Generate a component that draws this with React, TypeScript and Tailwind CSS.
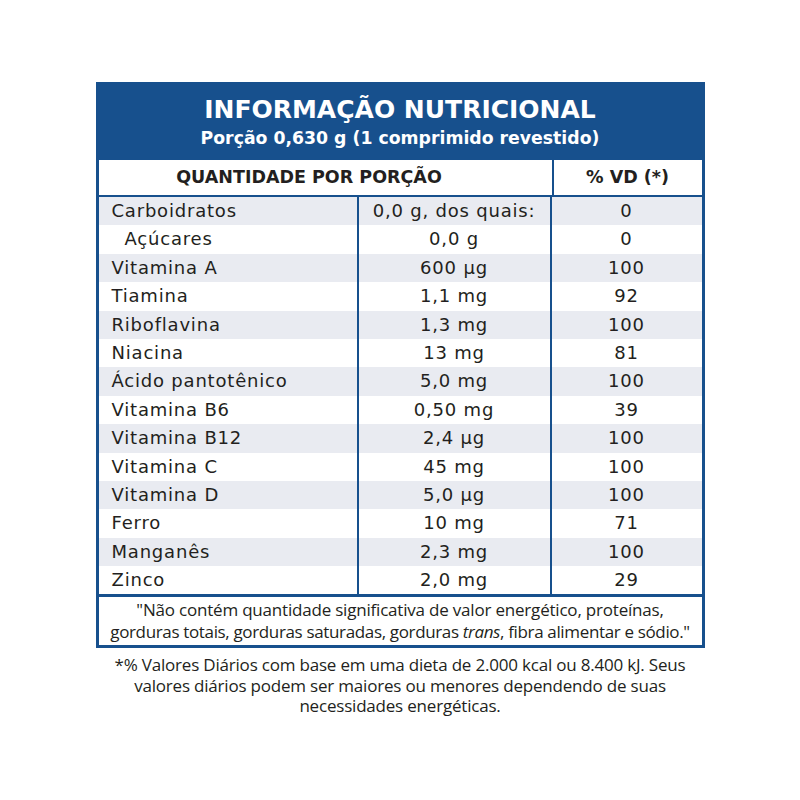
import React from "react";

const rows: [string, string, string][] = [
  ["Carboidratos", "0,0 g, dos quais:", "0"],
  ["\u00A0\u00A0Açúcares", "0,0 g", "0"],
  ["Vitamina A", "600 µg", "100"],
  ["Tiamina", "1,1 mg", "92"],
  ["Riboflavina", "1,3 mg", "100"],
  ["Niacina", "13 mg", "81"],
  ["Ácido pantotênico", "5,0 mg", "100"],
  ["Vitamina B6", "0,50 mg", "39"],
  ["Vitamina B12", "2,4 µg", "100"],
  ["Vitamina C", "45 mg", "100"],
  ["Vitamina D", "5,0 µg", "100"],
  ["Ferro", "10 mg", "71"],
  ["Manganês", "2,3 mg", "100"],
  ["Zinco", "2,0 mg", "29"],
];

const wide = { fontFamily: '"DejaVu Sans", "Open Sans", sans-serif' };
const narrow = { fontFamily: '"Open Sans", "Noto Sans", sans-serif' };

export default function App() {
  return (
    <div className="w-[800px] h-[800px] bg-white flex flex-col items-center pt-[82px] text-[#231f20]" style={wide}>
      <div className="w-[609px] border-[3px] border-[#17508d] bg-white">
        <div className="h-[75px] bg-[#17508d] flex flex-col items-center pt-[10px] text-white">
          <div className="text-[25px] font-bold leading-[30px]">INFORMAÇÃO NUTRICIONAL</div>
          <div className="text-[17.3px] font-bold leading-[22px] mt-[2px]">Porção 0,630 g (1 comprimido revestido)</div>
        </div>
        <div className="flex h-[37px] border-b-[2px] border-[#17508d]">
          <div className="w-[455px] border-r-[2px] border-[#17508d] flex items-center justify-center pr-[32px] text-[17.5px] font-bold">
            QUANTIDADE POR PORÇÃO
          </div>
          <div className="flex-1 flex items-center justify-center text-[17.5px] font-bold">% VD (*)</div>
        </div>
        <div className="flex flex-col">
          {rows.map((r, i) => (
            <div
              key={i}
              className={`flex h-[28.4px] text-[18px] leading-[28px] tracking-[0.8px] ${i % 2 === 0 ? "bg-[#e9ebf1]" : "bg-white"}`}
            >
              <div className="w-[260px] pl-[13px] border-r-[2px] border-[#17508d] whitespace-pre">{r[0]}</div>
              <div className="w-[193px] text-center border-r-[2px] border-[#17508d] whitespace-nowrap">{r[1]}</div>
              <div className="flex-1 text-center">{r[2]}</div>
            </div>
          ))}
        </div>
        <div
          className="border-t-[3px] border-[#17508d] h-[51px] flex flex-col items-center justify-center text-[17px] leading-[22px] tracking-[-0.2px]"
          style={narrow}
        >
          <div>"Não contém quantidade significativa de valor energético, proteínas,</div>
          <div className="tracking-[-0.35px]">
            gorduras totais, gorduras saturadas, gorduras <i>trans</i>, fibra alimentar e sódio."
          </div>
        </div>
      </div>
      <div className="mt-[7px] text-center text-[17px] leading-[20.5px] tracking-[-0.2px]" style={narrow}>
        <div className="h-[20.5px]">*% Valores Diários com base em uma dieta de 2.000 kcal ou 8.400 kJ. Seus</div>
        <div className="h-[20.5px]">valores diários podem ser maiores ou menores dependendo de suas</div>
        <div className="h-[20.5px]">necessidades energéticas.</div>
      </div>
    </div>
  );
}
